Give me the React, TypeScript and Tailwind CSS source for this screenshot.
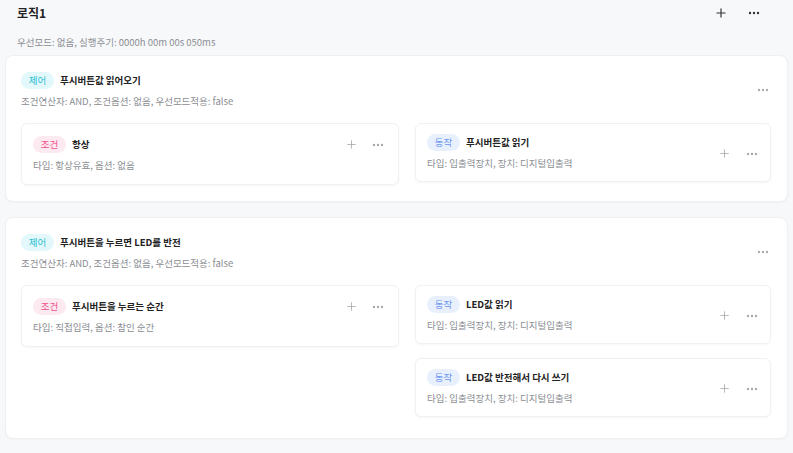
import { Plus } from 'lucide-react'

type Kind = '제어' | '조건' | '동작'

interface Item {
    kind: Kind,
    title: string,
    desc: string
}

interface Block {
    title: string,
    desc: string,
    conditions: Item[],
    actions: Item[]
}

const badgeStyle: Record<Kind, string> = {
    '제어': 'bg-[#e2f8fb] text-[#2cbfd3]',
    '조건': 'bg-[#fde9f0] text-[#f0538c]',
    '동작': 'bg-[#e9f0fd] text-[#6a94ee]',
}

const blocks: Block[] = [
    {
        title: '푸시버튼값 읽어오기',
        desc: '조건연산자: AND, 조건옵션: 없음, 우선모드적용: false',
        conditions: [{ kind: '조건', title: '항상', desc: '타입: 항상유효, 옵션: 없음' }],
        actions: [{ kind: '동작', title: '푸시버튼값 읽기', desc: '타입: 입출력장치, 장치: 디지털입출력' }],
    },
    {
        title: '푸시버튼을 누르면 LED를 반전',
        desc: '조건연산자: AND, 조건옵션: 없음, 우선모드적용: false',
        conditions: [{ kind: '조건', title: '푸시버튼을 누르는 순간', desc: '타입: 직접입력, 옵션: 참인 순간' }],
        actions: [
            { kind: '동작', title: 'LED값 읽기', desc: '타입: 입출력장치, 장치: 디지털입출력' },
            { kind: '동작', title: 'LED값 반전해서 다시 쓰기', desc: '타입: 입출력장치, 장치: 디지털입출력' },
        ],
    },
]

const Badge = ({ kind }: { kind: Kind }) => (
    <span className={`inline-flex items-center justify-center h-[17px] w-[33px] rounded-full text-[9.5px] ${badgeStyle[kind]}`}>
        {kind}
    </span>
)

const Dots = ({ className }: { className: string }) => (
    <svg width="12" height="4" viewBox="0 0 12 4" className={className}>
        <circle cx="2" cy="2" r="1.2" fill="currentColor" />
        <circle cx="6" cy="2" r="1.2" fill="currentColor" />
        <circle cx="10" cy="2" r="1.2" fill="currentColor" />
    </svg>
)

const ConditionCard = ({ item }: { item: Item }) => (
    <div className="bg-white rounded-md border border-[#f0f1f3] shadow-[0_1px_3px_rgba(0,0,0,0.04)] pl-[11px] pr-[14px] pt-3 pb-3">
        <div className="flex items-center h-[17px]">
            <Badge kind={item.kind} />
            <span className="ml-[6px] text-[9.5px] font-bold text-[#222]">{item.title}</span>
            <div className="ml-auto flex items-center gap-[14px]">
                <Plus size={13} strokeWidth={1.5} className="text-[#a5a8ad]" />
                <Dots className="text-[#a5a8ad]" />
            </div>
        </div>
        <p className="mt-[5px] text-[9.5px] leading-[14px] text-[#8b8e93]">{item.desc}</p>
    </div>
)

const ActionCard = ({ item }: { item: Item }) => (
    <div className="bg-white rounded-md border border-[#f0f1f3] shadow-[0_1px_3px_rgba(0,0,0,0.04)] pl-[11px] pr-[12px] pt-[10px] pb-[11px] flex items-center">
        <div>
            <div className="flex items-center h-[17px]">
                <Badge kind={item.kind} />
                <span className="ml-[6px] text-[9.5px] font-bold text-[#222]">{item.title}</span>
            </div>
            <p className="mt-[5px] text-[9.5px] leading-[14px] text-[#8b8e93]">{item.desc}</p>
        </div>
        <div className="ml-auto mt-[3px] flex items-center gap-[15px]">
            <Plus size={13} strokeWidth={1.5} className="text-[#a5a8ad]" />
            <Dots className="text-[#a5a8ad]" />
        </div>
    </div>
)

const BlockCard = ({ block }: { block: Block }) => (
    <div className="bg-white rounded-lg border border-[#eef0f2] shadow-[0_1px_2px_rgba(0,0,0,0.03)] pl-[15px] pr-4 pt-[16px] pb-[16px]">
        <div className="flex items-center">
            <div>
                <div className="flex items-center h-[17px]">
                    <Badge kind="제어" />
                    <span className="ml-[6px] text-[9.5px] font-bold text-[#222]">{block.title}</span>
                </div>
                <p className="mt-[5px] text-[9.5px] leading-[14px] text-[#8b8e93]">{block.desc}</p>
            </div>
            <Dots className="ml-auto mr-[2px] text-[#a9acb1]" />
        </div>
        <div className="mt-[15px] grid grid-cols-[378px_356px] gap-x-4">
            <div className="flex flex-col gap-[15px]">
                {block.conditions.map((c, i) => <ConditionCard key={i} item={c} />)}
            </div>
            <div className={`flex flex-col gap-[14px] ${block.actions.length > 1 ? 'pb-[5px]' : ''}`}>
                {block.actions.map((a, i) => <ActionCard key={i} item={a} />)}
            </div>
        </div>
    </div>
)

export default function App() {
    return (
        <main className="min-h-screen bg-[#f7f8fa] font-['Noto_Sans_CJK_KR','Noto_Sans',sans-serif]">
            <header className="pl-[17px] pr-[33px] pt-[4px]">
                <div className="flex items-center h-[18px]">
                    <h1 className="text-[12px] font-bold text-[#222]">로직1</h1>
                    <div className="ml-auto flex items-center gap-[20px]">
                        <Plus size={14} strokeWidth={2} className="text-[#333]" />
                        <Dots className="text-[#333]" />
                    </div>
                </div>
                <p className="mt-[13px] text-[9.5px] leading-[14px] text-[#8b8e93]">우선모드: 없음, 실행주기: 0000h 00m 00s 050ms</p>
            </header>
            <div className="mt-[6px] px-[5px] flex flex-col gap-[15px] pb-4">
                {blocks.map((b, i) => <BlockCard key={i} block={b} />)}
            </div>
        </main>
    )
}
